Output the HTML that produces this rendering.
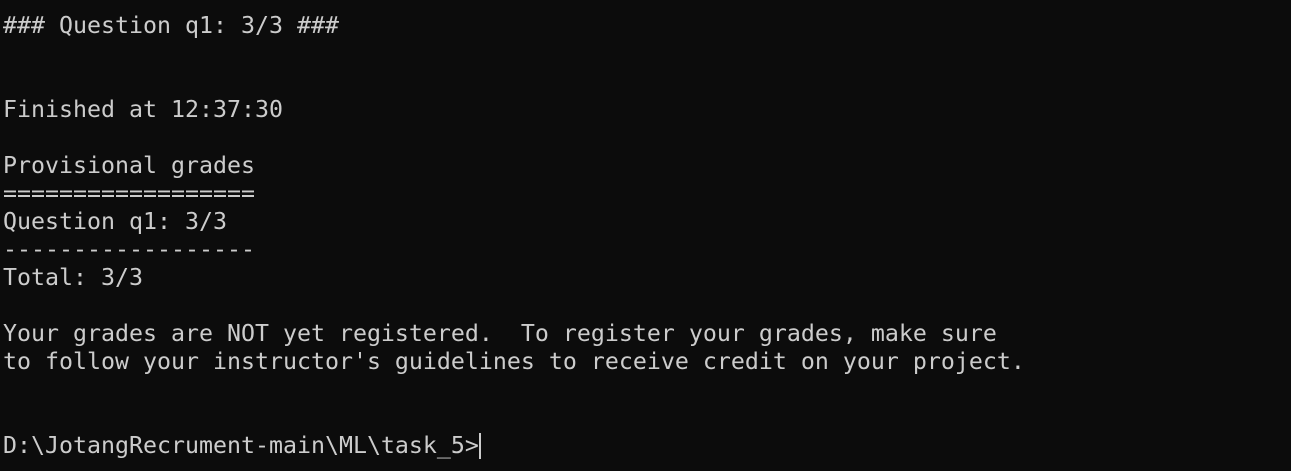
<!DOCTYPE html>
<html><head><style>
html,body{margin:0;padding:0;background:#0c0c0c;width:1291px;height:471px;overflow:hidden}
pre{margin:0;position:absolute;left:3px;top:12px;font-family:"DejaVu Sans Mono","Liberation Mono",monospace;font-size:23.25px;line-height:28px;color:#cccccc;letter-spacing:0}
.cur{display:inline-block;width:2px;height:26px;background:#cccccc;vertical-align:-6px}
</style></head><body>
<pre>### Question q1: 3/3 ###


Finished at 12:37:30

Provisional grades
==================
Question q1: 3/3
------------------
Total: 3/3

Your grades are NOT yet registered.  To register your grades, make sure
to follow your instructor's guidelines to receive credit on your project.


D:\JotangRecrument-main\ML\task_5&gt;<span class="cur"></span></pre>
</body></html>
